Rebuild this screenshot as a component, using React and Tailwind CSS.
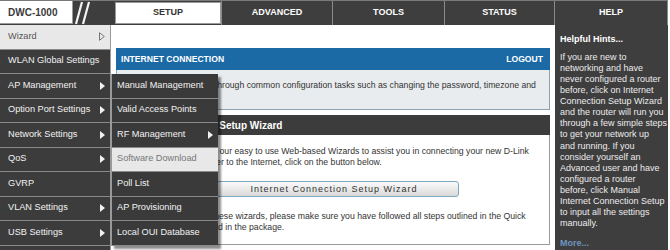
import React from "react";

const tabs = [
  { label: "SETUP", w: "w-[109px]", active: true },
  { label: "ADVANCED", w: "w-[111px]" },
  { label: "TOOLS", w: "w-[112px]" },
  { label: "STATUS", w: "w-[110px]" },
  { label: "HELP", w: "w-[113px]" },
];

const sideItems = [
  { label: "WLAN Global Settings" },
  { label: "AP Management", arrow: true },
  { label: "Option Port Settings", arrow: true },
  { label: "Network Settings", arrow: true },
  { label: "QoS", arrow: true },
  { label: "GVRP" },
  { label: "VLAN Settings", arrow: true },
  { label: "USB Settings", arrow: true },
  { label: "" },
];

const subItems = [
  { label: "Manual Management" },
  { label: "Valid Access Points" },
  { label: "RF Management", arrow: true },
  { label: "Software Download", disabled: true },
  { label: "Poll List" },
  { label: "AP Provisioning" },
  { label: "Local OUI Database" },
];

const hints = [
  "If you are new to",
  "networking and have",
  "never configured a router",
  "before, click on Internet",
  "Connection Setup Wizard",
  "and the router will run you",
  "through a few simple steps",
  "to get your network up",
  "and running. If you",
  "consider yourself an",
  "Advanced user and have",
  "configured a router",
  "before, click Manual",
  "Internet Connection Setup",
  "to input all the settings",
  "manually.",
];

const Arrow = () => (
  <svg width="5" height="8" viewBox="0 0 5 8">
    <path d="M0 0 L5 4 L0 8 Z" fill="#f2f2f2" />
  </svg>
);

export default function App() {
  return (
    <div className="w-[670px] h-[250px] bg-white overflow-hidden font-['Liberation_Sans',Arial,sans-serif]">
      <div className="w-[668px] h-[250px] flex flex-col">
        {/* ===== top bar ===== */}
        <div className="h-[25px] flex bg-[#3e3e3e] border-t border-[#7a7a7a]">
          <div className="w-[113px] flex items-start">
            <div className="w-[73px] h-[23px] bg-white border-b border-r border-[#9a9a9a] flex items-center pl-[8px] text-[10px] font-bold text-[#3a3a3a]">
              DWC-1000
            </div>
            <svg width="20" height="24" viewBox="0 0 20 24" className="ml-[1px]">
              <line x1="2" y1="23" x2="8" y2="1" stroke="#f4f4f4" strokeWidth="2.2" />
              <line x1="9" y1="23" x2="15" y2="1" stroke="#f4f4f4" strokeWidth="2.2" />
            </svg>
          </div>
          {tabs.map((t) => (
            <div
              key={t.label}
              className={`${t.w} h-full flex items-center justify-center text-[9px] font-bold border-r border-[#8a8a8a] ${
                t.active ? "bg-[#3e3e3e] p-[1px_0_1px_2px]" : "text-white"
              }`}
            >
              {t.active ? (
                <div className="w-full h-full bg-white border border-[#9a9a9a] flex items-center justify-center text-[#333]">
                  {t.label}
                </div>
              ) : (
                t.label
              )}
            </div>
          ))}
        </div>

        {/* ===== body ===== */}
        <div className="flex-1 flex relative">
          {/* sidebar */}
          <div className="w-[111px] bg-[#3c3c3c] border-r border-[#9a9a9a] flex flex-col text-[9.2px]">
            <div className="h-[24.5px] bg-[#e8e8e8] border-b border-[#8a8a8a] flex items-center justify-between pl-[8px] pr-[5px] text-[#555]">
              <span>Wizard</span>
              <svg width="6" height="9" viewBox="0 0 6 9">
                <path d="M0.5 0.7 L5.3 4.5 L0.5 8.3 Z" fill="none" stroke="#777" strokeWidth="1" />
              </svg>
            </div>
            {sideItems.map((s, i) => (
              <div
                key={i}
                className="h-[24.5px] shrink-0 border-b border-[#8a8a8a] flex items-center justify-between pl-[8px] pr-[5px] text-[#f2f2f2]"
              >
                <span>{s.label}</span>
                {s.arrow && <Arrow />}
              </div>
            ))}
          </div>

          {/* submenu overlay */}
          <div className="absolute left-[111px] top-[49px] w-[107px] bg-[#3a3a3a] border-l border-[#9a9a9a] shadow-[3px_3px_2px_rgba(0,0,0,0.45)] flex flex-col text-[9.2px] z-10">
            {subItems.map((s) => (
              <div
                key={s.label}
                className={`h-[24.5px] border-b border-[#8a8a8a] flex items-center justify-between pl-[5px] pr-[5px] ${
                  s.disabled ? "bg-[#e8e8e8] text-[#777]" : "text-[#f2f2f2]"
                }`}
              >
                <span>{s.label}</span>
                {s.arrow && <Arrow />}
              </div>
            ))}
          </div>

          {/* main content */}
          <div className="flex-1 pt-[23px] pl-[5px] pr-[5px] text-[8.7px] text-[#333]">
            <div className="h-[22px] bg-[#1b6aa6] flex items-center justify-between px-[5px] text-white font-bold text-[8.6px]">
              <span>INTERNET CONNECTION</span>
              <span className="pr-[2px]">LOGOUT</span>
            </div>
            <div className="h-[40px] bg-[#e9ecee] border border-t-0 border-[#8fa3b5] pl-[8px] pt-[9px] leading-[12px]">
              Use this wizard to step through common configuration tasks such as changing the password, timezone and
              <br />
              Internet connection.
            </div>

            <div className="mt-[5px] h-[20px] bg-[#3c3c3c] flex items-center px-[6px] text-white font-bold text-[10px]">
              Internet Connection Setup Wizard
            </div>
            <div className="h-[110px] border border-t-0 border-[#9a9a9a] pl-[4px] pt-[11px] leading-[11px]">
              <div>
                If you would like to utilize our easy to use Web-based Wizards to assist you in connecting your new D-Link
                <br />
                Unified Wireless Controller to the Internet, click on the button below.
              </div>
              <div className="flex justify-center mt-[13px] pr-[2px]">
                <button className="w-[250px] h-[16px] rounded-[3px] border border-[#7fa9c2] bg-gradient-to-b from-[#fbfbfb] to-[#d9d9d9] text-[9px] tracking-[1px] text-[#333] flex items-center justify-center">
                  Internet Connection Setup Wizard
                </button>
              </div>
              <div className="mt-[14px]">
                Note: Before launching these wizards, please make sure you have followed all steps outlined in the Quick
                <br />
                Installation Guide included in the package.
              </div>
            </div>
          </div>

          {/* help panel */}
          <div className="w-[113px] bg-[#3e3e3e] pl-[5px] text-[#ececec]">
            <div className="pt-[9px] text-[9px] font-bold text-white leading-[11px]">Helpful Hints...</div>
            <div className="mt-[7px] text-[9px] leading-[11.07px] whitespace-nowrap">
              {hints.map((h) => (
                <div key={h}>{h}</div>
              ))}
            </div>
            <div className="mt-[8px] text-[9px] font-bold text-[#6f95c0]">More...</div>
          </div>
        </div>
      </div>
    </div>
  );
}
